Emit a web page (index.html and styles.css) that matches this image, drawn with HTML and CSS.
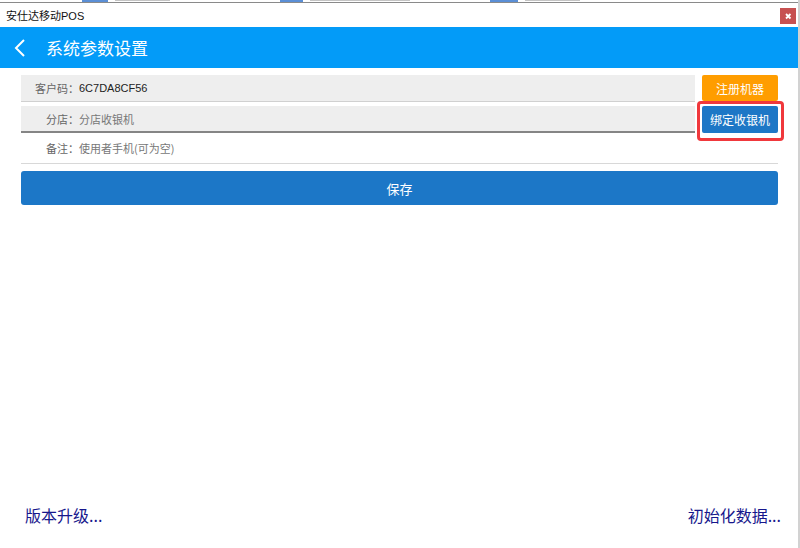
FILE: index.html
```html
<!DOCTYPE html>
<html lang="zh-CN">
<head>
    <meta charset="UTF-8">
    <title>安仕达移动POS</title>
    <link rel="stylesheet" href="styles.css">
</head>
<body>
<div class="strip">
    <span class="tile"></span><span class="frag w55"></span>
    <span class="tile t2"></span><span class="frag w100"></span>
    <span class="tile t3"></span><span class="frag w55"></span>
</div>
<div class="window">
    <div class="titlebar">
        <span class="apptitle">安仕达移动POS</span>
        <span class="close">
            <svg width="16" height="16" viewBox="0 0 16 16"><path d="M6 6 L10.5 10.5 M10.5 6 L6 10.5" stroke="#fff" stroke-width="1.8" fill="none"/></svg>
        </span>
    </div>
    <div class="header">
        <svg class="back" width="12" height="18" viewBox="0 0 12 18"><path d="M10 1 L2 9 L10 17" stroke="#fff" stroke-width="2" fill="none"/></svg>
        <span class="htitle">系统参数设置</span>
    </div>
    <div class="main">
        <div class="form">
            <div class="field grey">
                <span class="label">客户码：</span><span class="value">6C7DA8CF56</span>
            </div>
            <button class="btn orange">注册机器</button>
            <div class="field grey dark">
                <span class="label">分店：</span><span class="value hint">分店收银机</span>
            </div>
            <button class="btn blue marked">绑定收银机</button>
            <div class="field wide">
                <span class="label">备注：</span><span class="value hint">使用者手机(可为空)</span>
            </div>
            <button class="save">保存</button>
        </div>
    </div>
    <div class="footer">
        <a class="link">版本升级...</a>
        <a class="link">初始化数据...</a>
    </div>
</div>
</body>
</html>
```

FILE: styles.css
```css
*{
    margin: 0;
    padding: 0;
    box-sizing: border-box;
}
body{
    width: 800px;
    height: 548px;
    display: flex;
    flex-direction: column;
    font-family: "Liberation Sans", "Noto Sans CJK SC", sans-serif;
    background: #fff;
    border-right: 2px solid #d2d2d2;
}
/* 窗口上沿露出的桌面一角 */
.strip{
    height: 3px;
    display: flex;
    padding-left: 82px;
    border-bottom: 1px solid #8a8a8a;
}
.strip .tile{
    width: 26px;
    height: 2px;
    background: #5b8fd6;
}
.strip .t2{ margin-left: 110px; width: 23px; }
.strip .t3{ margin-left: 80px; width: 28px; }
.strip .frag{
    height: 1px;
    margin-left: 7px;
    background: #c4c4c4;
}
.strip .w55{ width: 55px; }
.strip .w100{ width: 100px; }

.window{
    flex: 1;
    display: flex;
    flex-direction: column;
}
.titlebar{
    height: 24px;
    display: flex;
    align-items: center;
    justify-content: space-between;
    padding-left: 6px;
    padding-right: 2px;
}
.apptitle{
    font-size: 11px;
    color: #111;
}
.close{
    width: 16px;
    height: 16px;
    align-self: flex-end;
    margin-bottom: 3px;
    background: #c75151;
    display: flex;
}
.header{
    height: 41px;
    background: #039bf8;
    display: flex;
    align-items: center;
    padding-left: 14px;
}
.back{
    margin-right: 20px;
}
.htitle{
    color: #fff;
    font-size: 17px;
    font-family: "Noto Sans CJK SC", sans-serif;
}
.main{
    flex: 1;
    padding: 7px 20px 0 21px;
}
.form{
    display: grid;
    grid-template-columns: 1fr 76px;
    column-gap: 7px;
}
.field{
    display: flex;
    align-items: center;
    font-size: 11px;
    font-family: "Noto Sans CJK SC", sans-serif;
}
.field.grey{
    height: 27px;
    background: #eeeeee;
    border-bottom: 1px solid #d0d0d0;
}
.field.dark{
    margin-top: 4px;
    height: 27px;
    border-bottom: 2px solid #858585;
}
.field.wide{
    grid-column: 1 / 3;
    height: 31px;
    border-bottom: 1px solid #d8d8d8;
}
.label{
    width: 58px;
    text-align: right;
    color: #666;
}
.value{
    color: #222;
    font-family: "Liberation Sans", "Noto Sans CJK SC", sans-serif;
}
.value.hint{
    color: #777;
    font-family: "Noto Sans CJK SC", sans-serif;
}
.btn{
    height: 26px;
    border: none;
    border-radius: 2px;
    color: #fff;
    font-size: 12px;
    font-family: "Noto Sans CJK SC", sans-serif;
}
.btn.orange{
    background: #ff9d00;
}
.btn.blue{
    background: #1d77c6;
    margin-top: 4px;
    height: 27px;
}
/* 红框标注 */
.btn.marked{
    position: relative;
}
.btn.marked::after{
    content: "";
    position: absolute;
    top: -5px;
    bottom: -8px;
    left: -5px;
    right: -6px;
    border: 3px solid #f0383c;
    border-radius: 4px;
}
.save{
    grid-column: 1 / 3;
    margin-top: 7px;
    height: 34px;
    border: none;
    border-radius: 3px;
    background: #1c77c7;
    color: #fff;
    font-size: 13px;
    font-family: "Noto Sans CJK SC", sans-serif;
}
.footer{
    display: flex;
    justify-content: space-between;
    padding: 0 17px 22px 25px;
}
.link{
    font-size: 16px;
    line-height: 22px;
    color: #17178c;
    font-family: "Noto Sans CJK SC", sans-serif;
}
```
